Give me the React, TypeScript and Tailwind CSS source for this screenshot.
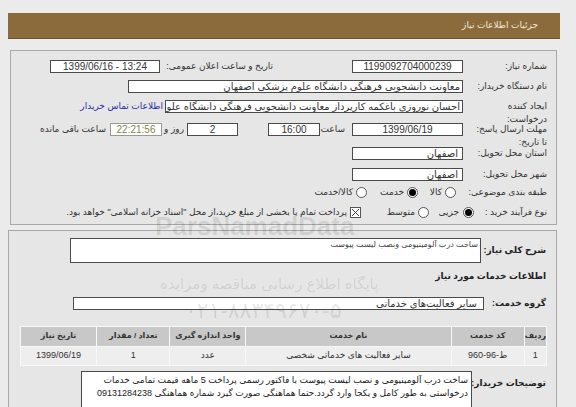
import React from 'react';

const font = { fontFamily: '"Liberation Sans", "DejaVu Sans", sans-serif' };

function Box({ className = '', children }: { className?: string; children?: React.ReactNode }) {
  return (
    <div
      className={`h-[13px] shrink-0 border border-[#4a4a4a] bg-white text-[10px] leading-[11px] text-[#333] whitespace-nowrap overflow-hidden ${className}`}
    >
      {children}
    </div>
  );
}

function Radio({ checked = false, className = '' }: { checked?: boolean; className?: string }) {
  return (
    <span
      className={`flex h-[11px] w-[11px] shrink-0 items-center justify-center rounded-full border border-[#555] bg-white ${className}`}
    >
      {checked && <span className="h-[7px] w-[7px] rounded-full bg-black" />}
    </span>
  );
}

function Label({ className = '', children }: { className?: string; children: React.ReactNode }) {
  return (
    <div className={`shrink-0 whitespace-nowrap text-[9px] leading-[13px] text-[#333] ${className}`}>{children}</div>
  );
}

const columns = [
  { title: 'ردیف', w: 'w-[21px]', value: '1' },
  { title: 'کد خدمت', w: 'w-[73px]', value: 'ط-96-960' },
  { title: 'نام خدمت', w: 'w-[207px]', value: 'سایر فعالیت های خدماتی شخصی' },
  { title: 'واحد اندازه گیری', w: 'w-[75px]', value: 'عدد' },
  { title: 'تعداد / مقدار', w: 'w-[73px]', value: '1' },
  { title: 'تاریخ نیاز', w: 'w-[76px]', value: '1399/06/19' },
];

export default function App() {
  return (
    <div dir="rtl" style={font} className="relative h-[407px] w-[576px] overflow-hidden bg-[#ebebeb]">
      {/* header */}
      <div className="mr-[16px] mt-[13px] flex h-[26px] w-[552px] items-center border-b border-[#6e5230] bg-[#8b6a3c] pr-[22px]">
        <span className="text-[9px] text-[#f3ead8]">جزئیات اطلاعات نیاز</span>
      </div>

      {/* details panel */}
      <div className="mr-[19px] mt-[11px] h-[175px] w-[547px] border border-[#a8a8a8] bg-[#e6e6e6] pr-[9px] pt-[9px]">
        <div className="flex h-[20px] items-start">
          <Label className="w-[84px]">شماره نیاز:</Label>
          <Box className="w-[111px] text-center">1199092704000239</Box>
          <Label className="mr-[79px] w-[108px]">تاریخ و ساعت اعلان عمومی:</Label>
          <Box className="mr-[5px] w-[110px] text-center">
            <span dir="ltr">1399/06/16 - 13:24</span>
          </Box>
        </div>
        <div className="flex h-[20px] items-start">
          <Label className="w-[84px]">نام دستگاه خریدار:</Label>
          <Box className="w-[335px] pr-[2px] text-[9px]">معاونت دانشجویی فرهنگی دانشگاه علوم پزشکی اصفهان</Box>
        </div>
        <div className="flex h-[23px] items-start">
          <Label className="w-[84px] leading-[11px]">
            ایجاد کننده
            <br />
            درخواست:
          </Label>
          <Box className="w-[298px] pr-[2px] text-[9px]">
            احسان نوروزی باغکمه کارپرداز معاونت دانشجویی فرهنگی دانشگاه علوم پزشکی
          </Box>
          <span className="mr-[2px] whitespace-nowrap text-[9px] leading-[13px] text-[#2b2ba8]">اطلاعات تماس خریدار</span>
        </div>
        <div className="flex h-[24px] items-start">
          <Label className="w-[84px] leading-[11px]">
            مهلت ارسال پاسخ:
            <br />
            تا تاریخ:
          </Label>
          <Box className="w-[111px] text-center">1399/06/19</Box>
          <Label className="mr-[7px] w-[22px]">ساعت</Label>
          <Box className="mr-[3px] w-[52px] text-center">16:00</Box>
          <Box className="mr-[30px] w-[51px] text-center">2</Box>
          <Label className="mr-[3px] w-[18px]">روز و</Label>
          <Box className="mr-[4px] w-[52px] border-[#999] bg-[#efefcf] text-center text-[#85854a]">22:21:56</Box>
          <Label className="mr-[4px]">ساعت باقی مانده</Label>
        </div>
        <div className="flex h-[21px] items-start">
          <Label className="w-[84px]">استان محل تحویل:</Label>
          <Box className="w-[111px] pr-[4px] text-[9px]">اصفهان</Box>
        </div>
        <div className="flex h-[14px] items-start">
          <Label className="w-[84px]">شهر محل تحویل:</Label>
          <Box className="w-[111px] pr-[4px] text-[9px]">اصفهان</Box>
        </div>
        <div className="flex h-[20px] items-center">
          <Label className="w-[84px]">طبقه بندی موضوعی:</Label>
          <Radio className="mr-[7px]" />
          <Label className="mr-[3px] w-[21px]">کالا</Label>
          <Radio checked className="mr-[3px]" />
          <Label className="mr-[3px] w-[26px]">خدمت</Label>
          <Radio className="mr-[11px]" />
          <Label className="mr-[3px]">کالا/خدمت</Label>
        </div>
        <div className="flex h-[20px] items-center">
          <Label className="w-[73px]">نوع فرآیند خرید :</Label>
          <Radio checked />
          <Label className="mr-[4px] w-[23px]">جزیی</Label>
          <Radio className="mr-[7px]" />
          <Label className="mr-[3px] w-[27px]">متوسط</Label>
          <svg className="mr-[27px] shrink-0" width="11" height="11" viewBox="0 0 11 11">
            <rect x="0.5" y="0.5" width="10" height="10" fill="#fff" stroke="#555" />
            <path d="M2 2 L9 9 M9 2 L2 9" stroke="#444" strokeWidth="1" />
          </svg>
          <Label className="mr-[3px]">پرداخت تمام یا بخشی از مبلغ خرید،از محل "اسناد خزانه اسلامی" خواهد بود.</Label>
        </div>
      </div>

      {/* services panel */}
      <div className="mr-[19px] mt-[5px] h-[200px] w-[549px] border border-[#a8a8a8] bg-[#e6e6e6] pr-[10px] pt-[7px]">
        <div className="flex items-center">
          <div className="w-[65px] shrink-0 whitespace-nowrap text-[9px] font-bold text-[#222]">شرح کلی نیاز:</div>
          <div className="h-[25px] w-[411px] border border-[#4a4a4a] bg-white pr-[2px] text-[8px] leading-[12px] text-[#444]">
            ساخت درب آلومینیومی ونصب لیست پیوست
          </div>
        </div>
        <div className="mt-[7px] whitespace-nowrap text-[9px] font-bold leading-[12px] text-[#222]">اطلاعات خدمات مورد نیاز</div>
        <div className="mt-[15px] flex items-center">
          <div className="w-[62px] shrink-0 whitespace-nowrap text-[9px] font-bold text-[#222]">گروه خدمت:</div>
          <Box className="w-[411px] pr-[6px] text-[9px]">سایر فعالیت‌های خدماتی</Box>
        </div>
        <table className="mr-[-1px] mt-[15px] w-[527px] border-separate border-spacing-[1px] bg-[#f8f8f8] text-[8px] text-[#333]">
          <thead>
            <tr>
              {columns.map((c) => (
                <th key={c.title} className={`${c.w} h-[19px] whitespace-nowrap bg-[#c8c8c8] p-0 text-center font-bold`}>
                  {c.title}
                </th>
              ))}
            </tr>
          </thead>
          <tbody>
            <tr>
              {columns.map((c) => (
                <td key={c.title} className={`${c.w} h-[18px] whitespace-nowrap bg-[#eeeeee] p-0 text-center text-[9px] font-normal`}>
                  {c.value}
                </td>
              ))}
            </tr>
          </tbody>
        </table>
        <div className="mt-[5px] flex items-start">
          <div className="w-[74px] shrink-0 whitespace-nowrap pt-[6px] text-[9px] font-bold text-[#222]">توضیحات خریدار:</div>
          <div className="h-[50px] w-[391px] overflow-hidden border border-[#4a4a4a] bg-white px-[3px] pt-[2px] text-[9px] leading-[13px] text-[#222]">
            <div className="whitespace-nowrap">
              ساخت درب آلومینیومی و نصب  لیست پیوست با فاکتور رسمی پرداخت 5 ماهه قیمت تمامی خدمات
            </div>
            <div className="whitespace-nowrap">
              درخواستی به طور کامل و یکجا وارد گردد.حتما هماهنگی صورت گیرد شماره هماهنگی  09131284238
            </div>
          </div>
        </div>
      </div>

      {/* watermark */}
      <div className="pointer-events-none absolute left-[155px] top-[213px] text-[26px] font-bold leading-none text-black/10" dir="ltr">
        ParsNamadData
      </div>
      <div className="pointer-events-none absolute left-[160px] top-[276px] text-[15px] leading-none text-black/10">
        پایگاه اطلاع رسانی مناقصه ومزایده
      </div>
      <div className="pointer-events-none absolute left-[185px] top-[300px] text-[22px] leading-none text-black/10" dir="ltr">
        ۰۲۱-۸۸۳۴۹۶۷۰-۵
      </div>
    </div>
  );
}
